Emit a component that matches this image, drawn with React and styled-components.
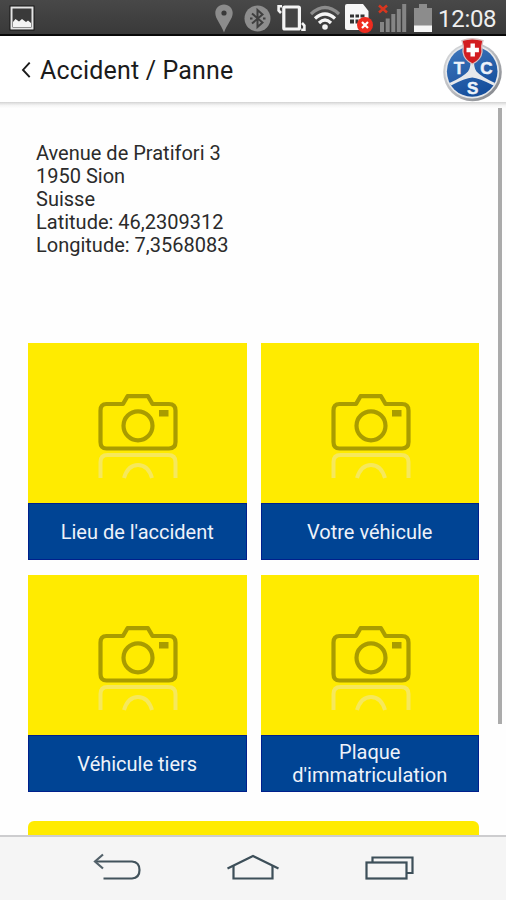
import React from 'react';
import styled, { createGlobalStyle } from 'styled-components';

const GlobalStyle = createGlobalStyle`
  * {
    box-sizing: border-box;
  }
  body {
    margin: 0;
    background: #fefefe;
    font-family: Roboto, "Liberation Sans", sans-serif;
  }
  svg {
    display: block;
    flex: none;
  }
`;

const Screen = styled.div`
  display: flex;
  flex-direction: column;
  width: 506px;
  height: 900px;
  overflow: hidden;
`;

const StatusBar = styled.div`
  display: flex;
  flex: none;
  align-items: center;
  justify-content: space-between;
  height: 36px;
  padding: 2px 9px 0 9px;
  background: linear-gradient(#484848, #393939);
  border-bottom: 2px solid #080808;
`;

const StatusIcons = styled.div`
  display: flex;
  align-items: center;
`;

const Clock = styled.div`
  width: 59px;
  margin-left: 6px;
  padding-top: 2px;
  color: #eeeeee;
  font-size: 24px;
  line-height: 30px;
  letter-spacing: -0.3px;
  white-space: nowrap;
`;

const Header = styled.header`
  display: flex;
  flex: none;
  align-items: center;
  justify-content: space-between;
  height: 66px;
  padding: 0 3px 0 21px;
  background: #ffffff;
`;

const BackButton = styled.button`
  display: flex;
  align-items: center;
  gap: 9px;
  padding: 3px 0 0;
  border: 0;
  background: none;
  color: #1b1b1b;
  font-family: inherit;
  font-size: 25px;
  line-height: 30px;
  letter-spacing: 0.17px;
`;

const HeaderShadow = styled.div`
  flex: none;
  height: 6px;
  background: linear-gradient(#d2d2d2, #e6e6e6 30%, #f6f6f6 60%, #fdfdfd);
`;

const Content = styled.main`
  display: flex;
  flex: 1;
  min-height: 0;
  justify-content: space-between;
  padding: 0 4px 0 28px;
  overflow: hidden;
`;

const Page = styled.div`
  display: flex;
  flex-direction: column;
  width: 451px;
`;

const Scrollbar = styled.div`
  width: 4px;
  height: 616px;
  background: #ababab;
`;

const Address = styled.address`
  flex: none;
  height: 235px;
  padding: 34px 8px 0;
  color: #2b2b2b;
  font-style: normal;
  font-size: 20px;
  line-height: 23px;
`;

const Line = styled.div`
  white-space: nowrap;
`;

const Grid = styled.div`
  display: grid;
  flex: none;
  grid-template-columns: 218.5px 218.5px;
  gap: 15px 14px;
`;

const Card = styled.div`
  display: flex;
  flex-direction: column;
  height: 217px;
  background: #ffeb00;
`;

const Picture = styled.div`
  display: flex;
  justify-content: center;
  height: 160px;
  padding: 49px 0 0 1.5px;
`;

const Label = styled.div`
  display: flex;
  flex: 1;
  align-items: center;
  justify-content: center;
  padding: 1px 24px 0;
  border: 1px solid #00208c;
  background: #004494;
  color: #eef2fa;
  font-size: 20px;
  line-height: 23px;
  text-align: center;
`;

const SendButton = styled.div`
  flex: none;
  height: 60px;
  margin-top: 29px;
  border-radius: 6px;
  background: #ffeb00;
`;

const NavBar = styled.nav`
  display: flex;
  flex: none;
  align-items: center;
  justify-content: space-between;
  height: 65px;
  padding: 0 89px 3px 91px;
  border-top: 2px solid #cdcdcf;
  background: #f5f5f5;
`;

function PhotoIcon() {
  return (
    <svg width="26" height="26" viewBox="0 0 26 26">
      <rect x="0.5" y="0.5" width="25" height="25" fill="#151515" />
      <rect x="2.5" y="2.5" width="21" height="21" fill="#3a3a3a" stroke="#e4e4e4" strokeWidth="2" />
      <path d="M4 17 L6.5 14 L10 16.5 L13 14 L17 17 L19 15.5 L22 18 V22 H4Z" fill="#f4f4f4" />
    </svg>
  );
}

function LocationIcon() {
  return (
    <svg width="18" height="29" viewBox="0 0 18 29">
      <path d="M9 0.5 C4 .5 .3 4.2 .3 9 C.3 15 6 20 9 28.5 C12 20 17.7 15 17.7 9 C17.7 4.2 14 .5 9 .5Z" fill="#8c8c8c" />
      <circle cx="9" cy="9" r="2.6" fill="#393939" />
    </svg>
  );
}

function BluetoothIcon() {
  return (
    <svg width="27" height="27" viewBox="0 0 27 27">
      <circle cx="13.5" cy="13.5" r="13" fill="#8d8d8d" />
      <path d="M8 8.5 L18.5 17.5 L13.5 22 V5 L18.5 9.5 L8 18.5" fill="none" stroke="#3f3f3f" strokeWidth="2" />
      <path d="M6 13.5h2.5M19 13.5h2.5" stroke="#3f3f3f" strokeWidth="2" />
    </svg>
  );
}

function RotateIcon() {
  return (
    <svg width="29" height="28" viewBox="0 0 29 28">
      <rect x="6.8" y="3" width="15.6" height="22" rx="1" fill="#444" stroke="#f4f4f4" strokeWidth="3.2" />
      <path d="M5 2.2 H1.6 V6.5 L4 9" fill="none" stroke="#f4f4f4" strokeWidth="2.6" />
      <path d="M24.2 25.8 H27.4 V21.5 L25 19" fill="none" stroke="#f4f4f4" strokeWidth="2.6" />
    </svg>
  );
}

function WifiIcon() {
  return (
    <svg width="30" height="26" viewBox="0 0 30 26" fill="none" strokeWidth="3.2">
      <path d="M1 9 Q15 -4 29 9" stroke="#8c8c8c" />
      <path d="M5 13.5 Q15 4.5 25 13.5" stroke="#f5f5f5" />
      <path d="M9 18 Q15 12 21 18" stroke="#f5f5f5" />
      <circle cx="15" cy="22" r="2.8" fill="#f5f5f5" />
    </svg>
  );
}

function SimIcon() {
  return (
    <svg width="29" height="30" viewBox="0 0 29 30">
      <path d="M0 3 Q0 1 2 1 H18 L23.5 8 V27 H2 Q0 27 0 25Z" fill="#f7f7f7" />
      <path d="M5 11.5h4v3H5z M10.5 11.5h3.5v3h-3.5z M15.5 11.5h4v3h-4z M5 16.5h4v4H5z M10.5 16.5h3v4h-3z" fill="#333" />
      <circle cx="20" cy="22" r="8" fill="#ee2b1f" />
      <path d="M17 19l6 6M23 19l-6 6" stroke="#fff" strokeWidth="2.2" />
    </svg>
  );
}

function SignalIcon() {
  return (
    <svg width="29" height="28" viewBox="0 0 29 28">
      <path d="M2 18h4v10h-4z M7.7 14.5h4V28h-4z M13.3 10h4v18h-4z M18.8 5h4v23h-4z M24.2 0h4v28h-4z" fill="#858585" />
      <path d="M1 1.5l8 7M9 1.5l-8 7" stroke="#d8361f" strokeWidth="2.5" />
    </svg>
  );
}

function BatteryIcon() {
  return (
    <svg width="18" height="28" viewBox="0 0 18 28">
      <path d="M5 0h8v4h5v24H0V4h5z" fill="#8c8c8c" />
      <rect x="0" y="21.5" width="18" height="6.5" fill="#f6f6f6" />
    </svg>
  );
}

const IconSlot = styled.div`
  margin-left: ${(props) => props.$left}px;
`;

function ChevronIcon() {
  return (
    <svg width="10" height="17" viewBox="0 0 10 17">
      <path d="M8.7 0.6 L2 7.9 L8.7 15.2" fill="none" stroke="#1b1b1b" strokeWidth="1.9" />
    </svg>
  );
}

const LogoText = styled.text`
  fill: #eef3fa;
  stroke: #eef3fa;
  stroke-width: 0.5px;
  font-family: "Liberation Sans", Arial, sans-serif;
  font-size: 17px;
  font-weight: 700;
  text-anchor: middle;
`;

function TcsLogo() {
  return (
    <svg width="61" height="66" viewBox="0 0 61 66">
      <defs>
        <linearGradient id="rim" x1="0" y1="0" x2="1" y2="1">
          <stop offset="0" stopColor="#dcdddf" />
          <stop offset="0.5" stopColor="#b9bbbf" />
          <stop offset="1" stopColor="#777a80" />
        </linearGradient>
        <linearGradient id="disc" x1="0" y1="0" x2="0.4" y2="1">
          <stop offset="0" stopColor="#4179bd" />
          <stop offset="1" stopColor="#164f9d" />
        </linearGradient>
      </defs>
      <circle cx="30.5" cy="36" r="29.3" fill="url(#rim)" />
      <circle cx="30.2" cy="35.5" r="27" fill="#e6e8eb" />
      <circle cx="30.2" cy="35.5" r="25.3" fill="url(#disc)" />
      <path d="M28.8 20 H31.8 Q31.5 32 34.5 35.5 Q39 40.5 53 47 L51.5 49.5 Q37 42 30.3 41.5 Q23 42 9 49.5 L7.5 47 Q21 41 26 35.5 Q29 32 28.8 20Z" fill="#e6e8eb" />
      <path d="M20 4.5 Q30 1 41 4.5 Q39 10 40 16 Q39 24 30.5 28 Q22 24 21 16 Q22 10 20 4.5Z" fill="#d21d20" stroke="#d9c1c1" strokeWidth="1.3" />
      <path d="M28.5 7.5h4.4v4.3h4v4.5h-4v4.2h-4.4v-4.2h-4v-4.5h4z" fill="#ffffff" />
      <LogoText x="17" y="38">T</LogoText>
      <LogoText x="44.5" y="38">C</LogoText>
      <LogoText x="30.7" y="58">S</LogoText>
    </svg>
  );
}

// camera with its faded reflection under it
function CameraIcon() {
  return (
    <svg width="82" height="92" viewBox="0 0 82 92" fill="none">
      <g stroke="#a99c00" strokeWidth="4.2" strokeLinejoin="round">
        <path d="M8.5 12 H26 L30.5 4.2 H51 L55.5 12 H72 Q78.5 12 78.5 18.5 V50 Q78.5 56.5 72 56.5 H9.5 Q3.5 56.5 3.5 50 V18.5 Q3.5 12 9.5 12" />
        <circle cx="41" cy="33.8" r="14.5" />
      </g>
      <rect x="62" y="18" width="9.5" height="6.5" fill="#a99c00" />
      <g stroke="#f6e85c" strokeWidth="4">
        <path d="M3.5 86 V70 Q3.5 63 10.5 63 H71 Q78.5 63 78.5 70 V86" />
        <path d="M27 86 Q31 73 41 73 Q51 73 55 86" />
      </g>
    </svg>
  );
}

function BackIcon() {
  return (
    <svg width="52" height="30" viewBox="0 0 52 30" fill="none" strokeWidth="2.2">
      <path d="M4 9.5 H41 Q48.5 10 48.5 18 Q48.5 26 41 26.5 H12.5" stroke="#42535c" />
      <path d="M12 2.5 L4 9.5 L12 16.5" stroke="#53616a" />
    </svg>
  );
}

function HomeIcon() {
  return (
    <svg width="54" height="30" viewBox="0 0 54 30" fill="none" stroke="#3d4f59" strokeWidth="2.2">
      <path d="M0.5 16.5 L26 4 L51.5 16.5" />
      <path d="M6.5 14 V26.5 H45.5 V14" />
    </svg>
  );
}

function RecentIcon() {
  return (
    <svg width="52" height="30" viewBox="0 0 52 30" fill="none" stroke="#3d4f59" strokeWidth="2.2">
      <path d="M7.5 10 V5.5 H47.5 V21 H42" />
      <rect x="1.5" y="10.5" width="40" height="16" />
    </svg>
  );
}

const address = [
  'Avenue de Pratifori 3',
  '1950 Sion',
  'Suisse',
  'Latitude: 46,2309312',
  'Longitude: 7,3568083',
];

const photos = [
  "Lieu de l'accident",
  'Votre véhicule',
  'Véhicule tiers',
  "Plaque d'immatriculation",
];

function App() {
  return (
    <Screen>
      <GlobalStyle />
      <StatusBar>
        <PhotoIcon />
        <StatusIcons>
          <IconSlot $left={0}><LocationIcon /></IconSlot>
          <IconSlot $left={11}><BluetoothIcon /></IconSlot>
          <IconSlot $left={6}><RotateIcon /></IconSlot>
          <IconSlot $left={4}><WifiIcon /></IconSlot>
          <IconSlot $left={5}><SimIcon /></IconSlot>
          <IconSlot $left={4}><SignalIcon /></IconSlot>
          <IconSlot $left={7}><BatteryIcon /></IconSlot>
          <Clock>12:08</Clock>
        </StatusIcons>
      </StatusBar>
      <Header>
        <BackButton>
          <ChevronIcon />
          Accident / Panne
        </BackButton>
        <TcsLogo />
      </Header>
      <HeaderShadow />
      <Content>
        <Page>
          <Address>
            {address.map((line) => (
              <Line key={line}>{line}</Line>
            ))}
          </Address>
          <Grid>
            {photos.map((name) => (
              <Card key={name}>
                <Picture>
                  <CameraIcon />
                </Picture>
                <Label>{name}</Label>
              </Card>
            ))}
          </Grid>
          <SendButton />
        </Page>
        <Scrollbar />
      </Content>
      <NavBar>
        <BackIcon />
        <HomeIcon />
        <RecentIcon />
      </NavBar>
    </Screen>
  );
}

export default App;
